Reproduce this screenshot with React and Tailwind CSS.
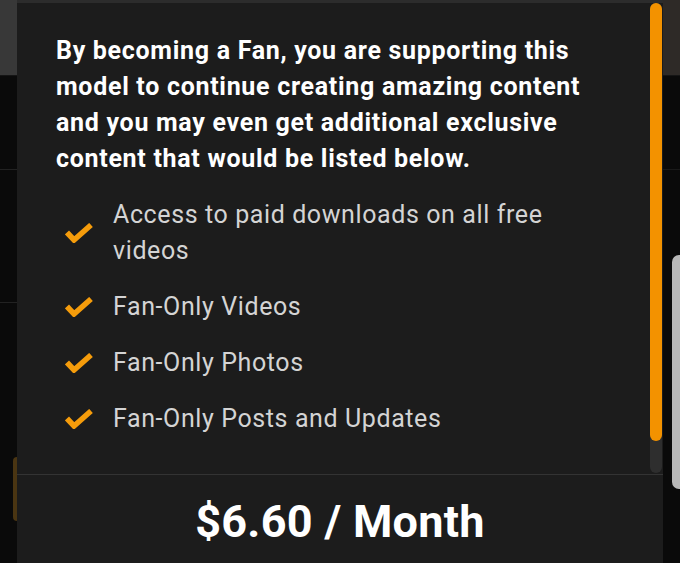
const perks = [
  'Access to paid downloads on all free videos',
  'Fan-Only Videos',
  'Fan-Only Photos',
  'Fan-Only Posts and Updates',
];

function Check() {
  return (
    <svg width="28" height="20" viewBox="0 0 28 20" className="shrink-0">
      <polyline
        points="2,9.5 9,17 26,2"
        fill="none"
        stroke="#f59c0b"
        strokeWidth="5.5"
        strokeLinejoin="miter"
      />
    </svg>
  );
}

// the page behind the modal, peeking out at the sides
function LeftEdge() {
  return (
    <div className="w-[17px] shrink-0 flex flex-col">
      <div className="h-[76px] bg-[#383838] border-b border-[#151515]" />
      <div className="h-[94px] border-b border-[#222]" />
      <div className="h-[133px] border-b border-[#222]" />
      <div className="mt-[154px] ml-[13px] w-[4px] h-[64px] rounded-l-[4px] bg-[#4a3512]" />
    </div>
  );
}

function RightEdge() {
  return (
    <div className="w-[17px] shrink-0 flex flex-col">
      <div className="h-[76px] bg-[#2e2a27] border-b border-[#151515]" />
      <div className="h-[94px] border-b border-[#1a1a1a]" />
      <div className="mt-[85px] ml-[9px] w-[8px] h-[234px] rounded-l-[7px] bg-[#b8b8b8]" />
    </div>
  );
}

export default function App() {
  return (
    <div
      className="w-[680px] h-[563px] overflow-hidden bg-[#0a0a0a] flex"
      style={{ fontFamily: 'Roboto, "Noto Sans", sans-serif' }}
    >
      <LeftEdge />

      <div className="w-[646px] shrink-0 flex flex-col bg-[#1c1c1c] border-t-[3px] border-[#2c2c2c]">
        <div className="relative h-[471px] shrink-0">
          <div className="pl-[39px] pr-[50px] pt-[30px]">
            <p className="text-[25px] leading-[36px] font-bold text-white tracking-[0.7px]">
              By becoming a Fan, you are supporting this model to continue creating amazing content and you may even get additional exclusive content that would be listed below.
            </p>
            <ul className="mt-[20px] flex flex-col gap-[20px]">
              {perks.map((p) => (
                <li key={p} className="flex items-center gap-[20px] pl-[9px]">
                  <Check />
                  <span className="text-[25px] leading-[36px] text-[#d4d4d4] tracking-[0.6px] max-w-[450px]">{p}</span>
                </li>
              ))}
            </ul>
          </div>
          <div className="absolute right-[1px] top-0 w-[12px] h-[470px] rounded-full bg-[#2e2e2e]">
            <div className="w-full h-[438px] rounded-full bg-[#f39200]" />
          </div>
        </div>
        <div className="h-px bg-[#333] shrink-0" />
        <div className="flex justify-center pt-[23px]">
          <span className="text-[45px] leading-[48px] font-bold text-white tracking-[0.3px]">
            $6.60 / Month
          </span>
        </div>
      </div>

      <RightEdge />
    </div>
  );
}
